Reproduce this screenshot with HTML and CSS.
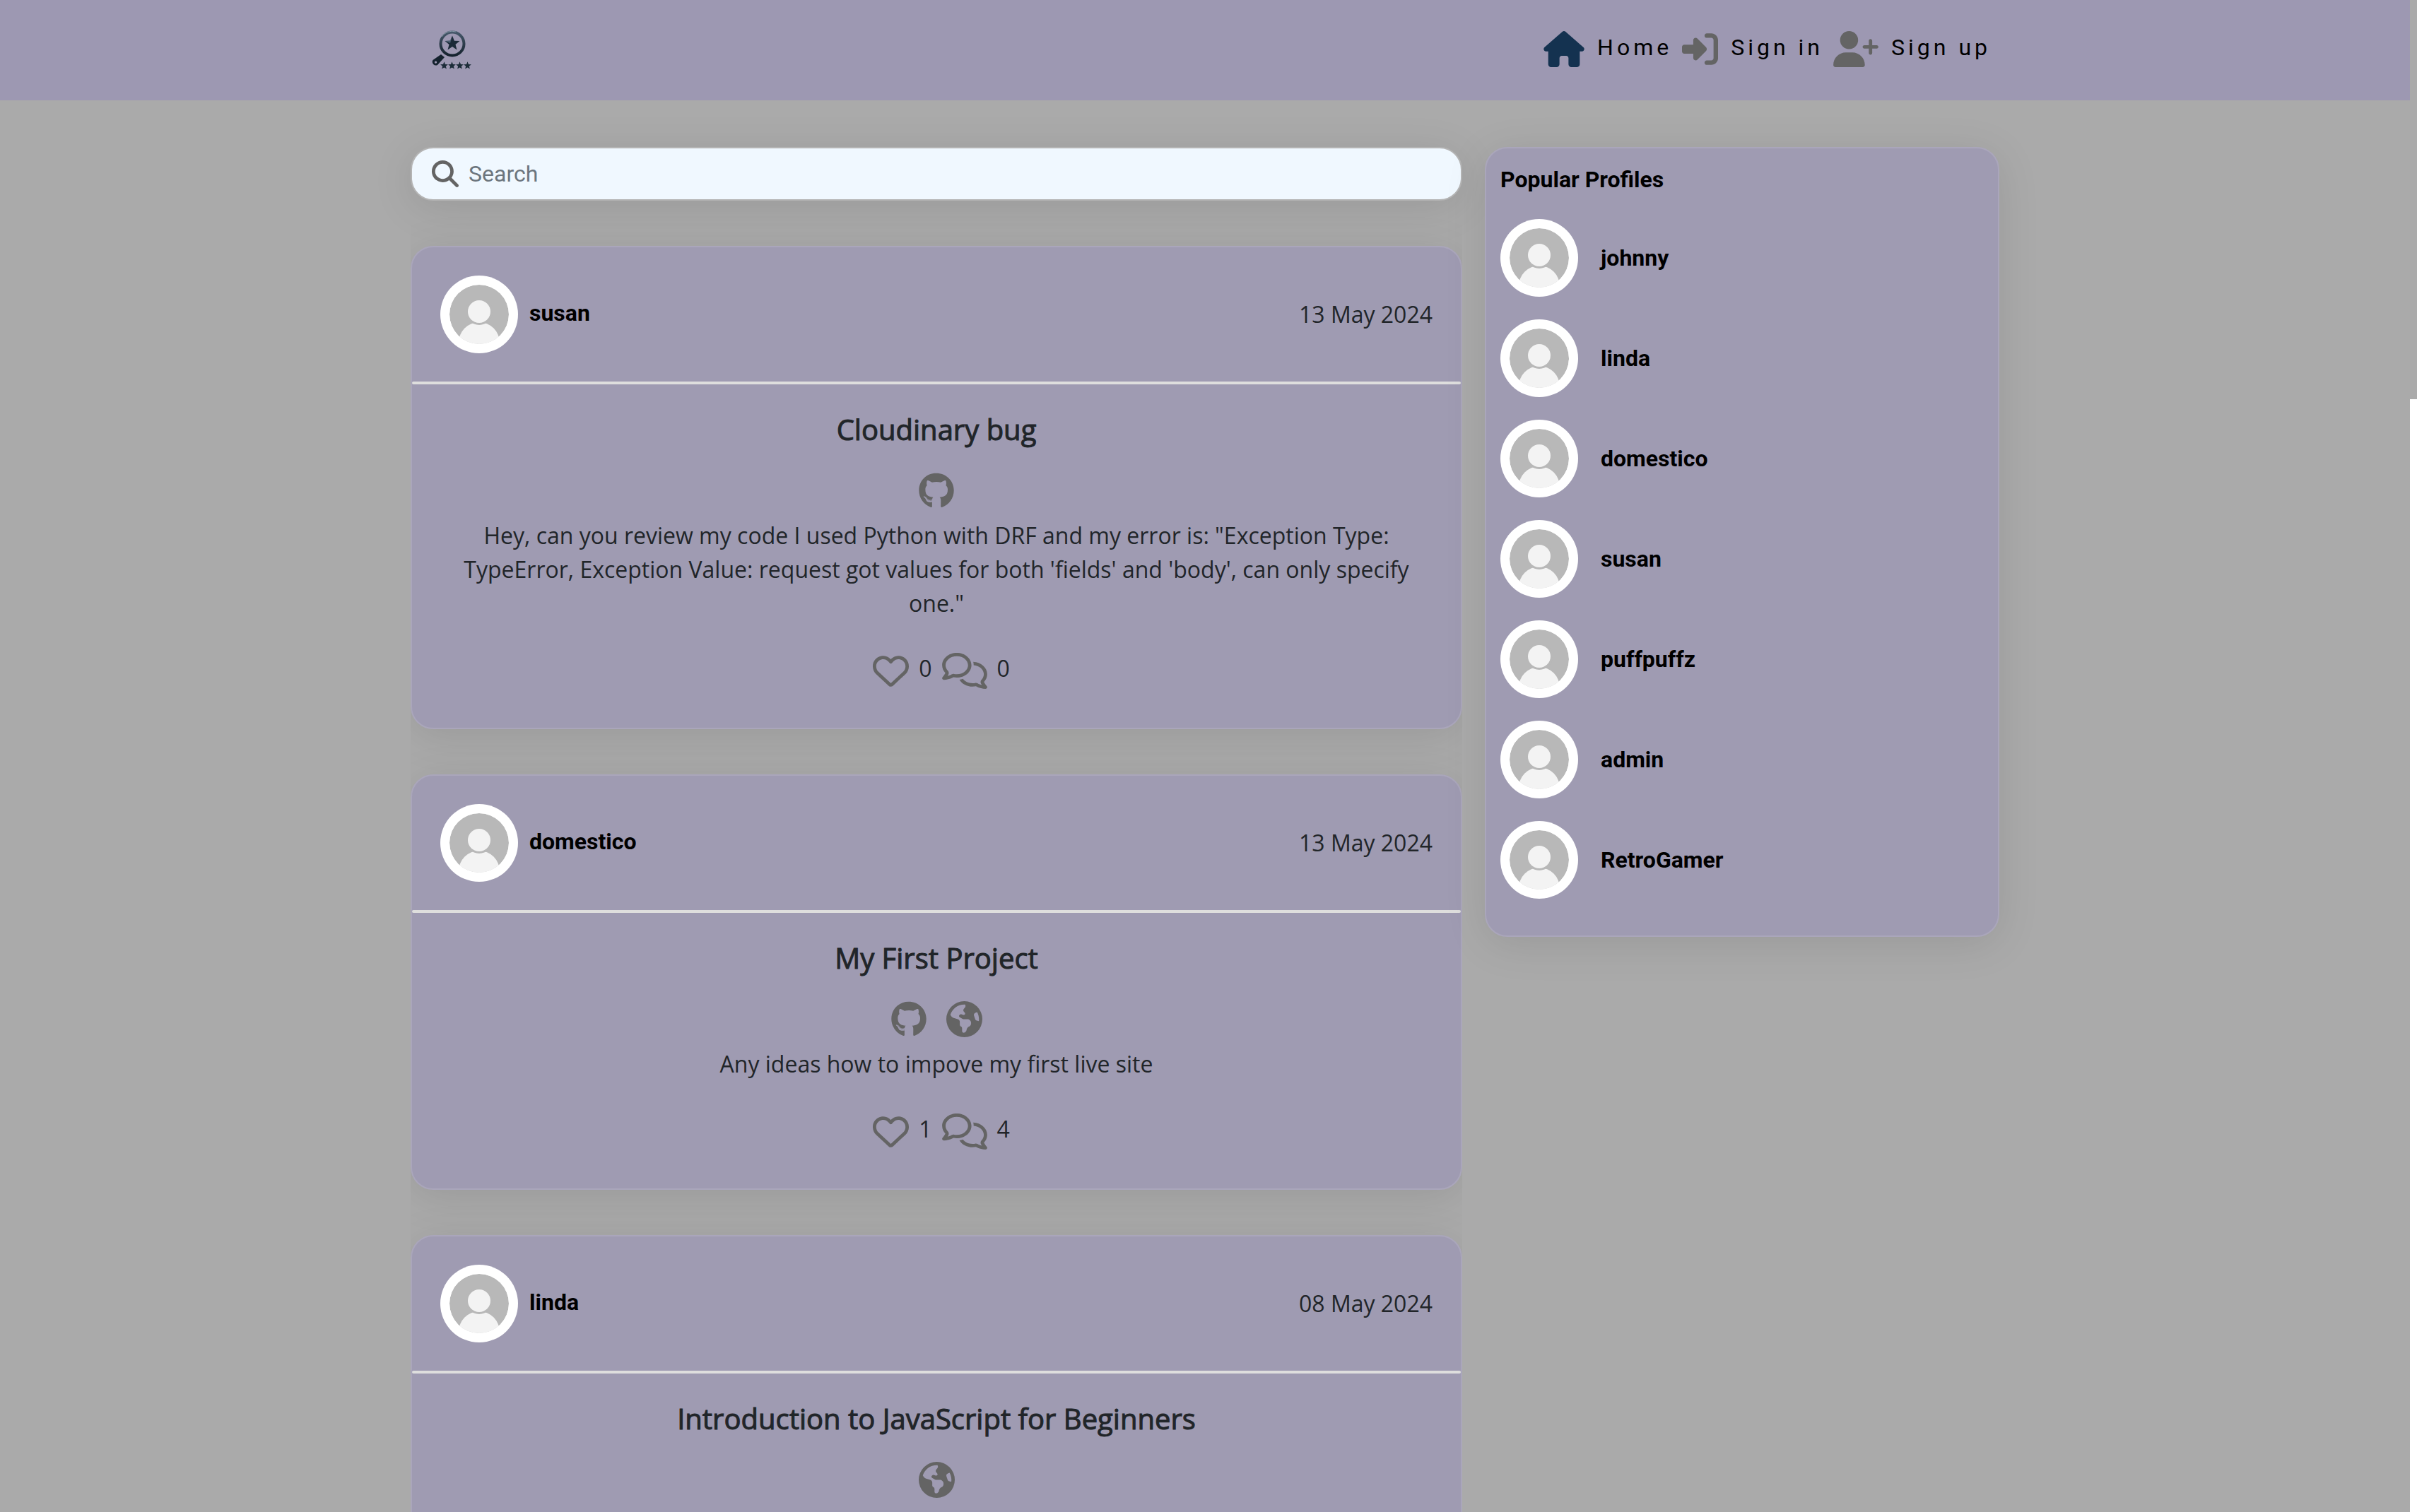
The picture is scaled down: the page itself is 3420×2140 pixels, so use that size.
FILE: index.html
```html
<!DOCTYPE html>
<html lang="en">
<head>
<meta charset="utf-8">
<meta name="viewport" content="width=device-width, initial-scale=1">
<title>Code reviews</title>
<link rel="stylesheet" href="styles.css">
</head>
<body>
<svg class="sprite" aria-hidden="true">
  <defs>
    <clipPath id="avatar-clip"><circle cx="55" cy="55" r="42"/></clipPath>
    <linearGradient id="ink" x1="0" y1="0" x2="0" y2="1"><stop offset="0" stop-color="#46586a"/><stop offset="1" stop-color="#15222e"/></linearGradient>
    <path id="star" d="M0-10 2.6-3.4 9.5-3.1 4.1 1.3 5.9 8.1 0 4.2-5.9 8.1-4.1 1.3-9.5-3.1-2.6-3.4Z"/>
  </defs>
  <symbol id="avatar" viewBox="0 0 110 110">
    <circle cx="55" cy="55" r="55" fill="#fff"/>
    <g clip-path="url(#avatar-clip)">
      <circle cx="55" cy="55" r="42" fill="#b8b8b8"/>
      <circle cx="55" cy="95" r="29" fill="#f3f3f3"/>
      <circle cx="55" cy="51" r="19" fill="#b8b8b8"/>
      <circle cx="55" cy="51" r="16" fill="#f3f3f3"/>
    </g>
  </symbol>
  <symbol id="house" viewBox="0 0 576 512"><path d="M575.8 255.5c0 18-15 32.1-32 32.1l-32 0 .7 160.2c0 2.7-.2 5.4-.5 8.1l0 16.2c0 22.1-17.9 40-40 40l-16 0c-1.1 0-2.2 0-3.3-.1c-1.4 .1-2.8 .1-4.2 .1L416 512l-24 0c-22.1 0-40-17.9-40-40l0-24 0-64c0-17.7-14.3-32-32-32l-64 0c-17.7 0-32 14.3-32 32l0 64 0 24c0 22.1-17.9 40-40 40l-24 0-31.9 0c-1.5 0-3-.1-4.5-.2c-1.2 .1-2.4 .2-3.6 .2l-16 0c-22.1 0-40-17.9-40-40l0-112c0-.9 0-1.9 .1-2.8l0-69.7-32 0c-18 0-32-14-32-32.1c0-9 3-17 10-24L266.4 8c7-7 15-8 22-8s15 2 21 7L564.8 231.5c8 7 12 15 11 24z"/></symbol>
  <symbol id="sign-in" viewBox="0 0 512 512"><path d="M217.9 105.9L340.7 228.7c7.2 7.2 11.3 17.1 11.3 27.3s-4.1 20.1-11.3 27.3L217.9 406.1c-6.4 6.4-15 9.9-24 9.9c-18.7 0-33.9-15.2-33.9-33.9l0-62.1L32 320c-17.7 0-32-14.3-32-32l0-64c0-17.7 14.3-32 32-32l128 0 0-62.1c0-18.7 15.2-33.9 33.9-33.9c9 0 17.6 3.6 24 9.9zM352 416l64 0c17.7 0 32-14.3 32-32l0-256c0-17.7-14.3-32-32-32l-64 0c-17.7 0-32-14.3-32-32s14.3-32 32-32l64 0c53 0 96 43 96 96l0 256c0 53-43 96-96 96l-64 0c-17.7 0-32-14.3-32-32s14.3-32 32-32z"/></symbol>
  <symbol id="user-plus" viewBox="0 0 640 512"><path d="M96 128a128 128 0 1 1 256 0A128 128 0 1 1 96 128zM0 482.3C0 383.8 79.8 304 178.3 304l91.4 0C368.2 304 448 383.8 448 482.3c0 16.4-13.3 29.7-29.7 29.7L29.7 512C13.3 512 0 498.7 0 482.3zM504 312l0-64-64 0c-13.3 0-24-10.7-24-24s10.7-24 24-24l64 0 0-64c0-13.3 10.7-24 24-24s24 10.7 24 24l0 64 64 0c13.3 0 24 10.7 24 24s-10.7 24-24 24l-64 0 0 64c0 13.3-10.7 24-24 24s-24-10.7-24-24z"/></symbol>
  <symbol id="magnifier" viewBox="0 0 512 512"><path d="M416 208c0 45.9-14.9 88.3-40 122.7L502.6 457.4c12.5 12.5 12.5 32.8 0 45.3s-32.8 12.5-45.3 0L330.7 376c-34.4 25.2-76.8 40-122.7 40C93.1 416 0 322.9 0 208S93.1 0 208 0S416 93.1 416 208zM208 352a144 144 0 1 0 0-288 144 144 0 1 0 0 288z"/></symbol>
  <symbol id="heart" viewBox="0 0 512 512"><path d="M225.8 468.2l-2.5-2.3L48.1 303.2C17.4 274.7 0 234.7 0 192.8l0-3.3c0-70.4 50-130.8 119.2-144C158.6 37.9 198.9 47 231 69.6c9 6.4 17.4 13.8 25 22.3c4.2-4.8 8.7-9.2 13.5-13.3c3.7-3.2 7.5-6.2 11.5-9c0 0 0 0 0 0C313.1 47 353.4 37.9 392.8 45.4C462 58.6 512 119.1 512 189.5l0 3.3c0 41.9-17.4 81.9-48.1 110.4L288.7 465.9l-2.5 2.3c-8.2 7.6-19 11.9-30.2 11.9s-22-4.2-30.2-11.9zM239.1 145c-.4-.3-.7-.7-1-1.1l-17.8-20-.1-.1s0 0 0 0c-23.1-25.9-58-37.7-92-31.2C81.6 101.5 48 142.1 48 189.5l0 3.3c0 28.5 11.9 55.8 32.8 75.2L256 430.7 431.2 268c20.9-19.4 32.8-46.7 32.8-75.2l0-3.3c0-47.3-33.6-88-80.1-96.9c-34-6.5-69 5.4-92 31.2c0 0 0 0-.1 .1s0 0-.1 .1l-17.8 20c-.3 .4-.7 .7-1 1.1c-4.5 4.5-10.6 7-16.9 7s-12.4-2.5-16.9-7z"/></symbol>
  <symbol id="comments" viewBox="0 0 640 512"><path d="M88.2 309.1c9.8-18.3 6.8-40.8-7.5-55.8C59.4 230.9 48 204 48 176c0-63.5 63.8-128 160-128s160 64.5 160 128s-63.8 128-160 128c-13.1 0-25.8-1.3-37.8-3.6c-10.4-2-21.2-.6-30.7 4.2c-4.1 2.1-8.3 4.1-12.6 6c-16 7.2-32.9 13.5-49.9 18c2.8-4.6 5.4-9.1 7.9-13.6c1.1-1.9 2.2-3.9 3.2-5.9zM208 352c114.9 0 208-78.8 208-176S322.9 0 208 0S0 78.8 0 176c0 41.8 17.2 80.1 45.9 110.3c-.9 1.7-1.9 3.5-2.8 5.1c-10.3 18.4-22.3 36.5-36.6 52.1c-6.6 7-8.3 17.2-4.6 25.9C5.8 378.3 14.4 384 24 384c43 0 86.5-13.3 122.7-29.7c4.8-2.2 9.6-4.5 14.2-6.8c15.1 3 30.9 4.5 47.1 4.5zM432 480c16.2 0 31.9-1.6 47.1-4.5c4.6 2.3 9.4 4.6 14.2 6.8C529.5 498.7 573 512 616 512c9.6 0 18.2-5.7 22-14.5c3.8-8.8 2-19-4.6-25.9c-14.2-15.6-26.2-33.7-36.6-52.1c-.9-1.7-1.9-3.4-2.8-5.1C622.8 384.1 640 345.8 640 304c0-94.4-87.9-171.5-198.2-175.8c4.1 15.2 6.2 31.2 6.2 47.8l0 .6c87.2 6.7 144 67.5 144 127.4c0 28-11.4 54.9-32.7 77.2c-14.3 15-17.3 37.6-7.5 55.8c1.1 2 2.2 4 3.2 5.9c2.5 4.5 5.2 9 7.9 13.6c-17-4.5-33.9-10.7-49.9-18c-4.3-1.9-8.5-3.9-12.6-6c-9.5-4.8-20.3-6.2-30.7-4.2c-12.1 2.4-24.8 3.6-37.8 3.6c-61.7 0-110-26.5-136.8-62.3c-16 5.4-32.8 9.4-50 11.8C279 439.8 350 480 432 480z"/></symbol>
  <symbol id="github" viewBox="0 0 496 512"><path d="M165.9 397.4c0 2-2.3 3.6-5.2 3.6-3.3.3-5.6-1.3-5.6-3.6 0-2 2.3-3.6 5.2-3.6 3-.3 5.6 1.3 5.6 3.6zm-31.1-4.5c-.7 2 1.3 4.3 4.3 4.9 2.6 1 5.6 0 6.2-2s-1.3-4.3-4.3-5.2c-2.6-.7-5.5.3-6.2 2.3zm44.2-1.7c-2.9.7-4.9 2.6-4.6 4.9.3 2 2.9 3.3 5.9 2.6 2.9-.7 4.9-2.6 4.6-4.6-.3-1.9-3-3.2-5.9-2.9zM244.8 8C106.1 8 0 113.3 0 252c0 110.9 69.8 205.8 169.5 239.2 12.8 2.3 17.3-5.6 17.3-12.1 0-6.2-.3-40.4-.3-61.4 0 0-70 15-84.7-29.8 0 0-11.4-29.1-27.8-36.6 0 0-22.9-15.7 1.6-15.4 0 0 24.9 2 38.6 25.8 21.9 38.6 58.6 27.5 72.9 20.9 2.3-16 8.8-27.1 16-33.7-55.9-6.2-112.3-14.3-112.3-110.5 0-27.5 7.6-41.3 23.6-58.9-2.6-6.5-11.1-33.3 2.6-67.9 20.9-6.5 69 27 69 27 20-5.6 41.5-8.5 62.8-8.5s42.8 2.9 62.8 8.5c0 0 48.1-33.6 69-27 13.7 34.7 5.2 61.4 2.6 67.9 16 17.7 25.8 31.5 25.8 58.9 0 96.5-58.9 104.2-114.8 110.5 9.2 7.9 17 22.9 17 46.4 0 33.7-.3 75.4-.3 83.6 0 6.5 4.6 14.4 17.3 12.1C428.2 457.8 496 362.9 496 252 496 113.3 383.5 8 244.8 8zM97.2 352.9c-1.3 1-1 3.3.7 5.2 1.6 1.6 3.9 2.3 5.2 1 1.3-1 1-3.3-.7-5.2-1.6-1.6-3.9-2.3-5.2-1zm-10.8-8.1c-.7 1.3.3 2.9 2.3 3.9 1.6 1 3.6.7 4.3-.7.7-1.3-.3-2.9-2.3-3.9-2-.6-3.6-.3-4.3.7zm32.4 35.6c-1.6 1.3-1 4.3 1.3 6.2 2.3 2.3 5.2 2.6 6.5 1 1.3-1.3.7-4.3-1.3-6.2-2.2-2.3-5.2-2.6-6.5-1zm-11.4-14.7c-1.6 1-1.6 3.6 0 5.9 1.6 2.3 4.3 3.3 5.6 2.3 1.6-1.3 1.6-3.9 0-6.2-1.4-2.3-4-3.3-5.6-2z"/></symbol>
  <symbol id="globe" viewBox="0 0 512 512"><path d="M57.7 193l9.4 16.4c8.3 14.5 21.9 25.2 38 29.8L163 255.7c17.2 4.9 29 20.6 29 38.5v39.9c0 11 6.2 21 16 25.9s16 14.9 16 25.9v39c0 15.6 14.9 26.9 29.9 22.6c16.1-4.6 28.6-17.5 32.7-33.8l2.8-11.2c4.2-16.9 15.2-31.4 30.3-40l8.1-4.6c15-8.5 24.2-24.5 24.2-41.7v-8.3c0-12.7-5.1-24.9-14.1-33.9l-3.9-3.9c-9-9-21.2-14.1-33.9-14.1H257c-11.1 0-22.1-2.9-31.8-8.4l-34.5-19.7c-4.3-2.5-7.6-6.5-9.2-11.2c-3.2-9.6 1.1-20 10.2-24.5l5.9-3c6.6-3.3 14.3-3.9 21.3-1.5l23.2 7.7c8.2 2.7 17.2-.4 21.9-7.5c4.7-7 4.2-16.3-1.2-22.8l-13.6-16.3c-10-12-9.9-29.5 .3-41.3l15.7-18.3c8.8-10.3 10.2-25 3.5-36.7l-2.4-4.2c-3.5-.2-6.9-.3-10.4-.3C163.1 48 84.4 108.9 57.7 193zM464 256c0-36.8-9.6-71.4-26.4-101.5L412 164.8c-15.7 6.3-23.8 23.8-18.5 39.8l16.9 50.7c3.5 10.4 12 18.3 22.6 20.9l29.1 7.3c1.2-9 1.8-18.2 1.8-27.5zM0 256a256 256 0 1 1 512 0A256 256 0 1 1 0 256z"/></symbol>
  <symbol id="logo" viewBox="0 0 56 56">
    <circle cx="29" cy="19" r="16.5" fill="none" stroke="url(#ink)" stroke-width="4"/>
    <path d="M14 9A17.800 17.800 0 0 1 34 2" fill="none" stroke="#8496a6" stroke-width="1"/>
    <use href="#star" transform="translate(29 18.500) scale(1.100)" fill="#1b2a38"/>
    <path d="M29 7.500 26 14.500 19 15 26 18Z" fill="#4a5d70"/>
    <path fill-rule="evenodd" fill="#15222e" d="M13 34 18 38 8 49A5 5 0 0 1 1.500 42ZM5.500 43.500a1.600 1.600 0 1 0 .1 0Z"/>
    <g fill="#1c2c39"><use href="#star" transform="translate(17.500 50) scale(.57)"/><use href="#star" transform="translate(28.500 50) scale(.57)"/><use href="#star" transform="translate(39.500 50) scale(.57)"/><use href="#star" transform="translate(50.500 50) scale(.57)"/></g>
  </symbol>
</svg>

<div class="page">
  <header class="navbar">
    <div class="container navbar-inner">
      <a class="brand" href="#" aria-label="Home page"><svg class="logo"><use href="#logo"/></svg></a>
      <nav class="nav">
        <a class="nav-link active" href="#"><svg class="icon icon-house"><use href="#house"/></svg>Home</a>
        <a class="nav-link" href="#"><svg class="icon"><use href="#sign-in"/></svg>Sign in</a>
        <a class="nav-link" href="#"><svg class="icon icon-wide"><use href="#user-plus"/></svg>Sign up</a>
      </nav>
    </div>
  </header>

  <main class="container layout">
    <section class="feed">
      <form class="search">
        <label for="q" aria-label="Search"><svg class="search-icon"><use href="#magnifier"/></svg></label>
        <input id="q" class="search-input" type="text" placeholder="Search">
      </form>

      <div class="posts">
        <article class="card post">
          <div class="post-head">
            <a class="author" href="#"><svg class="avatar"><use href="#avatar"/></svg><span class="author-name">susan</span></a>
            <span>13 May 2024</span>
          </div>
          <hr class="rule">
          <div class="post-body">
            <h2 class="post-title">Cloudinary bug</h2>
            <div class="post-links">
              <a href="#" aria-label="GitHub"><svg class="icon icon-github"><use href="#github"/></svg></a>
            </div>
            <p class="post-text">Hey, can you review my code I used Python with DRF and my error is: "Exception Type: TypeError, Exception Value: request got values for both 'fields' and 'body', can only specify one."</p>
            <div class="post-stats"><a href="#" aria-label="Like"><svg class="icon"><use href="#heart"/></svg></a>0<a href="#" aria-label="Comments"><svg class="icon icon-wide"><use href="#comments"/></svg></a>0</div>
          </div>
        </article>

        <article class="card post">
          <div class="post-head">
            <a class="author" href="#"><svg class="avatar"><use href="#avatar"/></svg><span class="author-name">domestico</span></a>
            <span>13 May 2024</span>
          </div>
          <hr class="rule">
          <div class="post-body">
            <h2 class="post-title">My First Project</h2>
            <div class="post-links">
              <a href="#" aria-label="GitHub"><svg class="icon icon-github"><use href="#github"/></svg></a>
              <a href="#" aria-label="Website"><svg class="icon"><use href="#globe"/></svg></a>
            </div>
            <p class="post-text">Any ideas how to impove my first live site</p>
            <div class="post-stats"><a href="#" aria-label="Like"><svg class="icon"><use href="#heart"/></svg></a>1<a href="#" aria-label="Comments"><svg class="icon icon-wide"><use href="#comments"/></svg></a>4</div>
          </div>
        </article>

        <article class="card post">
          <div class="post-head">
            <a class="author" href="#"><svg class="avatar"><use href="#avatar"/></svg><span class="author-name">linda</span></a>
            <span>08 May 2024</span>
          </div>
          <hr class="rule">
          <div class="post-body">
            <h2 class="post-title">Introduction to JavaScript for Beginners</h2>
            <div class="post-links">
              <a href="#" aria-label="Website"><svg class="icon"><use href="#globe"/></svg></a>
            </div>
          </div>
        </article>
      </div>
    </section>

    <aside class="side">
      <div class="card profiles">
        <h2 class="profiles-title">Popular Profiles</h2>
        <a class="profile" href="#"><svg class="avatar"><use href="#avatar"/></svg>johnny</a>
        <a class="profile" href="#"><svg class="avatar"><use href="#avatar"/></svg>linda</a>
        <a class="profile" href="#"><svg class="avatar"><use href="#avatar"/></svg>domestico</a>
        <a class="profile" href="#"><svg class="avatar"><use href="#avatar"/></svg>susan</a>
        <a class="profile" href="#"><svg class="avatar"><use href="#avatar"/></svg>puffpuffz</a>
        <a class="profile" href="#"><svg class="avatar"><use href="#avatar"/></svg>admin</a>
        <a class="profile" href="#"><svg class="avatar"><use href="#avatar"/></svg>RetroGamer</a>
      </div>
    </aside>
  </main>
</div>
<div class="scrollbar" aria-hidden="true"><div class="scrollbar-thumb"></div></div>
</body>
</html>
```
FILE: styles.css
```css
*,
*::before,
*::after {
  box-sizing: border-box;
}

body {
  display: flex;
  height: 100vh;
  margin: 0;
  overflow: hidden;
  background: #aaaaaa;
  color: #212529;
  font: 400 32px/48px "Open Sans", sans-serif;
}

a {
  color: inherit;
  text-decoration: none;
}

.sprite {
  position: absolute;
  width: 0;
  height: 0;
}

.page {
  flex: 1;
  min-width: 0;
  overflow-y: auto;
  scrollbar-width: none;
}

.scrollbar {
  flex: none;
  width: 10px;
  background: #ffffff;
}

.scrollbar-thumb {
  height: 26.4%;
  background: #aaaaaa;
}

.container {
  width: 100%;
  max-width: 2280px;
  margin: 0 auto;
}

/* Icons */

.icon {
  width: 51px;
  height: 51px;
  margin: 0 14px;
  vertical-align: -17px;
  fill: #646464;
}

.icon-house {
  width: 58px;
}

.icon-wide {
  width: 64px;
}

.icon-github {
  width: 50px;
}

.avatar {
  width: 110px;
  height: 110px;
  vertical-align: middle;
}

/* Navbar */

.navbar {
  background: #9d98b2;
}

.navbar-inner {
  display: flex;
  align-items: center;
  justify-content: space-between;
  min-height: 142px;
  padding: 0 28px 0 46px;
}

.brand,
.logo {
  display: block;
  width: 56px;
  height: 56px;
}

.nav {
  display: flex;
  padding-bottom: 4px;
}

.nav-link {
  color: #000000;
  font-family: Roboto, sans-serif;
  font-weight: 400;
  letter-spacing: 5px;
}

.nav-link .icon {
  margin-right: 18px;
}

.nav-link.active .icon {
  fill: #143250;
}

/* Layout */

.layout {
  display: grid;
  grid-template-columns: 2fr 1fr;
  align-items: start;
  padding: 66px 0;
}

.feed,
.side {
  min-width: 0;
  padding: 0 16px;
}

.posts {
  display: grid;
  gap: 64px;
  overflow-x: clip;
}

.card,
.search {
  border: 2px solid #aaa6bb;
  border-radius: 32px;
  background: #9f9bb2;
  box-shadow: 0 10px 60px rgba(0, 0, 0, 0.1);
}

/* Search */

.search {
  display: flex;
  align-items: center;
  height: 76px;
  margin-bottom: 64px;
  padding: 0 28px;
  border-color: #b4b4b4;
  background: #f0f8ff;
}

.search-icon {
  display: block;
  width: 38px;
  height: 38px;
  fill: #646464;
}

.search-input {
  flex: 1;
  min-width: 0;
  height: 72px;
  padding: 0 14px;
  border: 0;
  outline: 0;
  background: transparent;
  color: #212529;
  font: 400 32px/48px Roboto, sans-serif;
}

.search-input::placeholder {
  color: #6c757d;
  opacity: 1;
}

/* Posts */

.post-head {
  display: flex;
  align-items: center;
  justify-content: space-between;
  padding: 40px;
}

.author {
  display: flow-root;
  height: 110px;
}

.author-name {
  margin-left: 16px;
  color: #000000;
  font-family: Roboto, sans-serif;
  font-weight: 700;
}

.rule {
  height: 4px;
  margin: 0;
  border: 0;
  border-radius: 2px;
  background: #dededd;
}

.post-body {
  padding: 40px;
  text-align: center;
}

.post-title {
  margin: 0 0 37px;
  font-size: 40px;
  font-weight: 400;
  line-height: 48px;
  -webkit-text-stroke: 1px #212529;
}

.post-links {
  display: flex;
  justify-content: center;
  margin-bottom: 14px;
}

.post-links .icon {
  display: block;
}

.post-text {
  margin: 0 0 44px;
}

.post-stats {
  height: 68px;
}

/* Popular profiles */

.profiles {
  display: grid;
  gap: 32px;
  padding: 20px 20px 52px;
  color: #000000;
  font-family: Roboto, sans-serif;
  font-weight: 700;
}

.profiles-title {
  margin: 0;
  font-size: 32px;
  font-weight: 700;
}

.profile {
  display: flex;
  align-items: center;
  gap: 32px;
}
```
